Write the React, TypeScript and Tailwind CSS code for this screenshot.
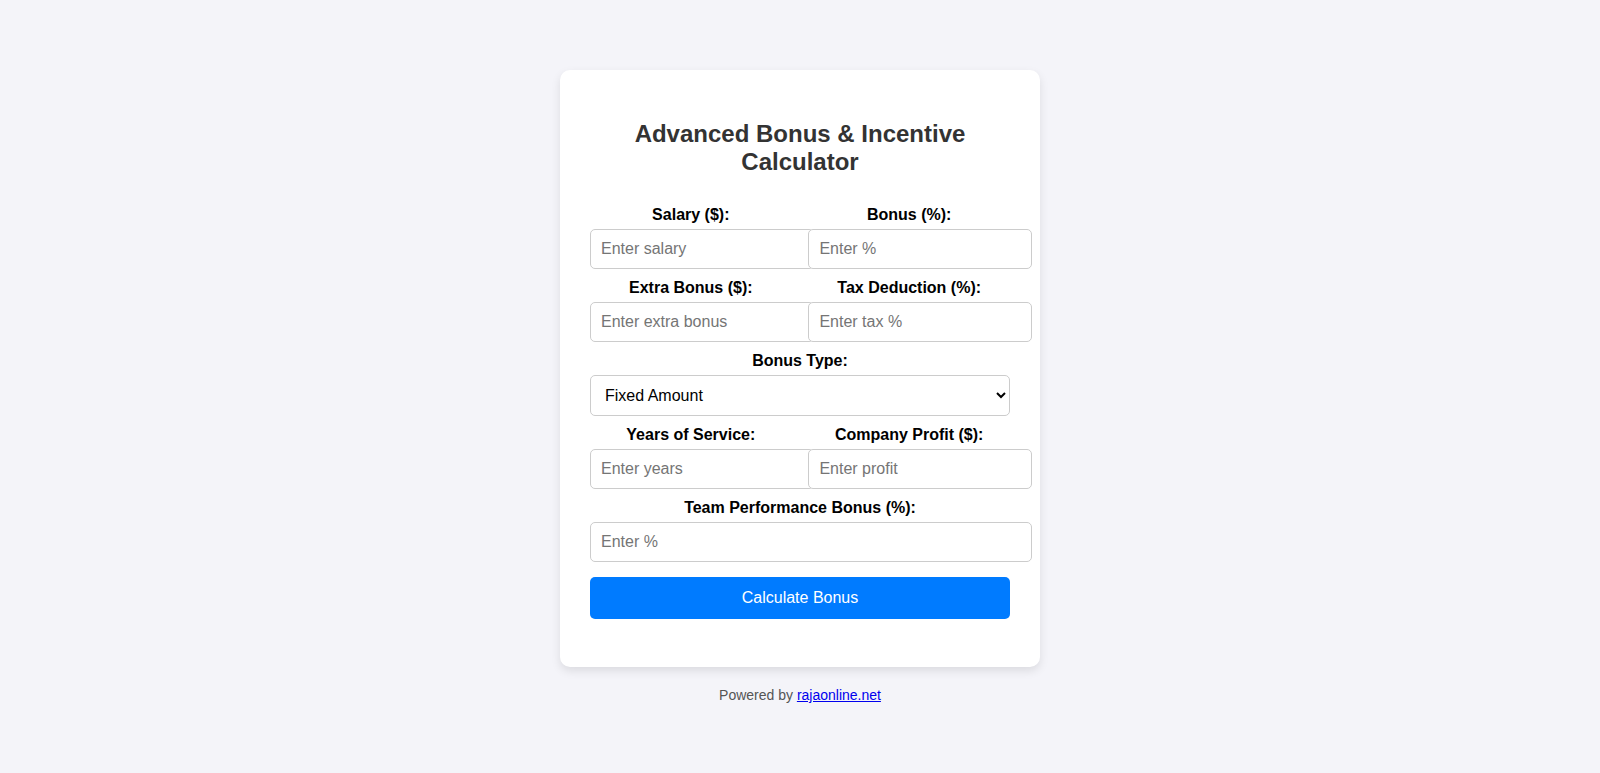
const pairs = [
  [
    { label: "Salary ($):", placeholder: "Enter salary" },
    { label: "Bonus (%):", placeholder: "Enter %" },
  ],
  [
    { label: "Extra Bonus ($):", placeholder: "Enter extra bonus" },
    { label: "Tax Deduction (%):", placeholder: "Enter tax %" },
  ],
]

const pairsAfter = [
  [
    { label: "Years of Service:", placeholder: "Enter years" },
    { label: "Company Profit ($):", placeholder: "Enter profit" },
  ],
]

const inputClass =
  "box-content block w-full p-[10px] border border-[#ccc] rounded-[5px] text-[16px] leading-[normal] bg-white text-black placeholder:text-[#757575] mb-[10px]"

function Field({ label, placeholder }: { label: string; placeholder: string }) {
  return (
    <div className="w-[48%]">
      <label className="block text-center font-bold text-black mb-[5px]">{label}</label>
      <input type="number" placeholder={placeholder} className={inputClass} />
    </div>
  )
}

function Row({ fields }: { fields: { label: string; placeholder: string }[] }) {
  return (
    <div className="flex justify-between">
      {fields.map((f) => (
        <Field key={f.label} {...f} />
      ))}
    </div>
  )
}

export default function App() {
  return (
    <div
      className="min-h-screen bg-[#f4f4f9] pt-[70px] leading-[normal] text-[16px]"
      style={{ fontFamily: '"Liberation Sans", Arial, sans-serif' }}
    >
      <div className="mx-auto w-[480px] rounded-[10px] bg-white px-[30px] pt-[30px] pb-[48px] shadow-[0_4px_10px_rgba(0,0,0,0.1)]">
        <h2 className="mt-5 mb-[30px] text-center text-[24px] font-bold leading-[normal] text-[#333]">
          Advanced Bonus &amp; Incentive Calculator
        </h2>

        {pairs.map((p, i) => (
          <Row key={i} fields={p} />
        ))}

        {/* Bonus type */}
        <label className="block text-center font-bold text-black mb-[5px]">Bonus Type:</label>
        <select className="block w-full p-[10px] border border-[#ccc] rounded-[5px] text-[16px] leading-[normal] bg-white text-black mb-[10px]">
          <option>Fixed Amount</option>
          <option>Percentage</option>
        </select>

        {pairsAfter.map((p, i) => (
          <Row key={i} fields={p} />
        ))}

        <label className="block text-center font-bold text-black mb-[5px]">Team Performance Bonus (%):</label>
        <input type="number" placeholder="Enter %" className={inputClass} />

        <button className="mt-[15px] block w-full rounded-[5px] bg-[#007bff] py-3 text-[16px] leading-[normal] text-white">
          Calculate Bonus
        </button>
      </div>

      <p className="mt-5 text-center text-[14px] text-[#555]">
        Powered by{" "}
        <a href="#" className="text-[#0000ee] underline">
          rajaonline.net
        </a>
      </p>
    </div>
  )
}
